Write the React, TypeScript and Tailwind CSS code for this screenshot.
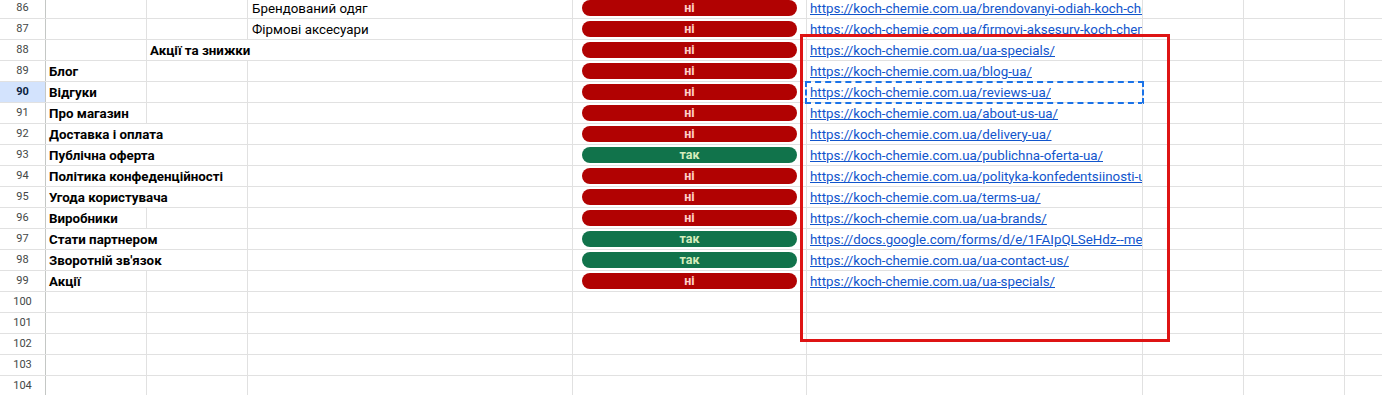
import React from "react";

type Row = {
  n: number;
  a?: string;
  b?: string;
  c?: string;
  chip?: "yes" | "no";
  link?: string;
  hideA?: boolean;
  hideB?: boolean;
  selected?: boolean;
};

const K = "https://koch-chemie.com.ua/";

const rows: Row[] = [
  { n: 86, c: "Брендований одяг", chip: "no", link: K + "brendovanyi-odiah-koch-chemie/" },
  { n: 87, c: "Фірмові аксесуари", chip: "no", link: K + "firmovi-aksesury-koch-chemie/" },
  { n: 88, b: "Акції та знижки", hideB: true, chip: "no", link: K + "ua-specials/" },
  { n: 89, a: "Блог", chip: "no", link: K + "blog-ua/" },
  { n: 90, a: "Відгуки", chip: "no", link: K + "reviews-ua/", selected: true },
  { n: 91, a: "Про магазин", chip: "no", link: K + "about-us-ua/" },
  { n: 92, a: "Доставка і оплата", hideA: true, chip: "no", link: K + "delivery-ua/" },
  { n: 93, a: "Публічна оферта", hideA: true, chip: "yes", link: K + "publichna-oferta-ua/" },
  { n: 94, a: "Політика конфеденційності", hideA: true, chip: "no", link: K + "polityka-konfedentsiinosti-ua/" },
  { n: 95, a: "Угода користувача", hideA: true, chip: "no", link: K + "terms-ua/" },
  { n: 96, a: "Виробники", chip: "no", link: K + "ua-brands/" },
  { n: 97, a: "Стати партнером", hideA: true, chip: "yes", link: "https://docs.google.com/forms/d/e/1FAIpQLSeHdz--mezQ/viewform" },
  { n: 98, a: "Зворотній зв'язок", hideA: true, chip: "yes", link: K + "ua-contact-us/" },
  { n: 99, a: "Акції", chip: "no", link: K + "ua-specials/" },
  { n: 100 },
  { n: 101 },
  { n: 102 },
  { n: 103 },
  { n: 104 },
];

function Chip({ kind }: { kind: "yes" | "no" }) {
  const yes = kind === "yes";
  return (
    <div
      className={
        "flex h-[16px] flex-1 items-center justify-center rounded-full text-[12.5px] font-bold leading-none " +
        (yes ? "bg-[#11734b] text-[#d4edbc]" : "bg-[#b10202] text-[#ffcfc9]")
      }
    >
      {yes ? "так" : "ні"}
    </div>
  );
}

export default function App() {
  return (
    <div
      className="relative h-[395px] w-[1382px] overflow-hidden bg-white text-[10pt] text-black"
      style={{ fontFamily: 'Roboto, "Liberation Sans", Arial, sans-serif' }}
    >
      <div className="-mt-[2px] flex flex-col">
        {rows.map((r) => (
          <div key={r.n} className="flex h-[21px] border-b border-[#e1e1e1]">
            <div
              className={
                "flex w-[46px] shrink-0 items-center justify-center border-r border-[#c4c7c5] pt-px text-[11px] " +
                (r.selected ? "bg-[#d3e3fd] font-bold text-[#0b1f3f]" : "text-[#444746]")
              }
            >
              {r.n}
            </div>
            <div
              className={
                "relative z-10 flex w-[101px] shrink-0 items-center whitespace-nowrap pl-[3px] pt-px font-bold " +
                (r.hideA ? "border-r border-transparent" : "border-r border-[#e1e1e1]")
              }
            >
              {r.a}
            </div>
            <div
              className={
                "relative z-10 flex w-[101px] shrink-0 items-center whitespace-nowrap pl-[3px] pt-px font-bold " +
                (r.hideB ? "border-r border-transparent" : "border-r border-[#e1e1e1]")
              }
            >
              {r.b}
            </div>
            <div className="flex w-[325px] shrink-0 items-center whitespace-nowrap border-r border-[#e1e1e1] pl-[4px] pt-px">
              {r.c}
            </div>
            <div className="flex w-[234px] shrink-0 items-center border-r border-[#e1e1e1] px-[9px]">
              {r.chip && <Chip kind={r.chip} />}
            </div>
            <div className="relative flex w-[336px] shrink-0 items-center border-r border-[#e1e1e1] pl-[3px] pt-px">
              <div className="overflow-hidden whitespace-nowrap">
                {r.link && <span className="text-[#1155cc] underline">{r.link}</span>}
              </div>
              {r.selected && (
                <div className="pointer-events-none absolute -left-[2px] -top-[1px] h-[23px] w-[339px] border-2 border-dashed border-[#1a73e8]" />
              )}
            </div>
            <div className="w-[101px] shrink-0 border-r border-[#e1e1e1]" />
            <div className="w-[101px] shrink-0 border-r border-[#e1e1e1]" />
            <div className="flex-1" />
          </div>
        ))}
      </div>
      <div className="pointer-events-none absolute left-[800px] top-[34px] h-[308px] w-[370px] border-[3px] border-[#de1414]" />
    </div>
  );
}
